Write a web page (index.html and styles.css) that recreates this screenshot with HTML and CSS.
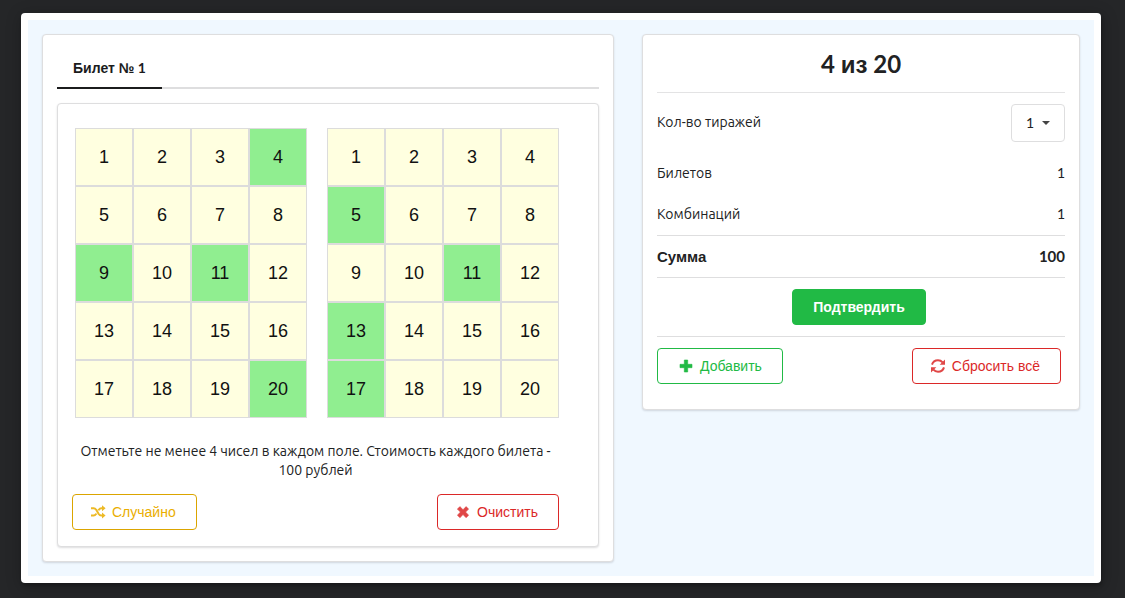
FILE: index.html
```html
<!DOCTYPE html>
<html lang="ru">
<head>
<meta charset="utf-8">
<meta name="viewport" content="width=device-width, initial-scale=1">
<title>4 из 20</title>
<link rel="stylesheet" href="styles.css">
</head>
<body>
<main class="modal">
  <div class="content">
    <section class="segment ticket">
      <nav class="tabs" role="tablist">
        <button class="tab active" type="button" role="tab" aria-selected="true"><span class="word">Билет №</span> 1</button>
      </nav>
      <div class="segment panel">
        <div class="fields">
          <div class="field" id="field-1"></div>
          <div class="field" id="field-2"></div>
        </div>
        <p class="hint">Отметьте не менее 4 чисел в каждом поле. Стоимость каждого билета - 100 рублей</p>
        <div class="actions">
          <button class="btn yellow" type="button">
            <svg class="icon" viewBox="0 0 16 14" aria-hidden="true"><path d="M1 3.2h2.6c1.2 0 1.900.600 2.600 1.600l2.500 4.200c.7 1 1.400 1.500 2.500 1.500h1.500M1 10.500h2.600c1.100 0 1.800-.5 2.500-1.500l.3-.5M8.400 5.400l.4-.6c.7-1 1.400-1.600 2.500-1.600h1.500" fill="none" stroke="currentColor" stroke-width="2"/><path d="M12 .2 15.600 3.200 12 6.300zM12 7.400l3.600 3.100L12 13.600z"/></svg>
            <span>Случайно</span>
          </button>
          <button class="btn red" type="button">
            <svg class="icon" viewBox="0 0 16 14" aria-hidden="true"><path d="M4.900 1.600 8 4.700l3.100-3.100 2.500 2.500L10.600 7.100l3 3.100-2.500 2.500L8 9.600l-3.100 3.100-2.500-2.500 3-3.100-3-3z" stroke="currentColor" stroke-width=".6" stroke-linejoin="round"/></svg>
            <span>Очистить</span>
          </button>
        </div>
      </div>
    </section>
    <aside class="segment summary">
      <h1 class="title">4 <span class="word">из</span> 20</h1>
      <div class="row draws">
        <label for="draws">Кол-во тиражей</label>
        <span class="dropdown">
          <select id="draws"><option>1</option><option>2</option><option>3</option></select>
          <svg class="caret" viewBox="0 0 8 4" aria-hidden="true"><path d="M0 0h8L4 4z"/></svg>
        </span>
      </div>
      <div class="row"><span>Билетов</span><span class="num">1</span></div>
      <div class="row"><span>Комбинаций</span><span class="num">1</span></div>
      <div class="row total"><span>Сумма</span><span class="num">100</span></div>
      <div class="confirm"><button class="btn primary" type="button">Подтвердить</button></div>
      <div class="actions bottom">
        <button class="btn green" type="button">
          <svg class="icon" viewBox="0 0 16 14" aria-hidden="true"><path d="M6.300 1h3.400v4.300H14v3.400H9.700V13H6.300V8.700H2V5.300h4.300z" stroke="currentColor" stroke-width=".6" stroke-linejoin="round"/></svg>
          <span>Добавить</span>
        </button>
        <button class="btn red" type="button">
          <svg class="icon" viewBox="0 0 16 14" aria-hidden="true"><path d="M2 5.600C2.800 2.900 5.200 1.200 8 1.200c1.900 0 3.500.8 4.600 2.100M14 8.400c-.8 2.700-3.200 4.400-6 4.400-1.900 0-3.500-.8-4.600-2.100" fill="none" stroke="currentColor" stroke-width="2"/><path d="M15 .5v5.300H9.700zM1 13.500V8.200h5.300z"/></svg>
          <span>Сбросить всё</span>
        </button>
      </div>
    </aside>
  </div>
</main>
<script src="script.js"></script>
</body>
</html>
```
FILE: styles.css
```css
*, *::before, *::after { box-sizing: border-box; }
body {
  margin: 0;
  background: #252628;
  color: #212223;
  font: 14px/19px "Ubuntu", "Noto Sans", sans-serif;
}
button, select { font: inherit; color: inherit; cursor: pointer; }
.modal {
  width: 96%;
  margin: 13px auto 15px 21px;
  padding: 7px;
  background: #fff;
  border-radius: 4px;
  box-shadow: 1px 3px 3px rgba(0, 0, 0, .2), 1px 3px 15px 2px rgba(0, 0, 0, .2);
}
.content {
  display: grid;
  grid-template-columns: 9fr 7fr;
  align-items: start;
  background: #f0f8ff;
}
.segment {
  background: #fff;
  border: 1px solid #dededf;
  border-radius: 4px;
  box-shadow: 0 1px 2px rgba(34, 36, 38, .15);
  padding: 14px;
}
.content > .segment { margin: 14px; }
.tabs { display: flex; border-bottom: 2px solid #dededf; }
.tab {
  height: 40px;
  margin-bottom: -2px;
  padding: 0 16px;
  border: 0;
  border-bottom: 2px solid #1b1c1d;
  background: none;
  color: #1b1c1d;
  font: bold 14px/38px Lato, "Liberation Sans", sans-serif;
}
.word { font-family: "Liberation Sans", Arial, sans-serif; line-height: 1; }
.panel { margin-top: 14px; padding: 24px 39px 16px 14px; }
.fields { display: flex; gap: 20px; padding-left: 3px; }
.field { display: grid; grid-template-columns: repeat(4, 58px); }
.cell {
  height: 58px;
  padding: 0;
  border: 1px solid #dcdcdc;
  background: #ffffe0;
  color: #111;
  font: 18px/56px "Liberation Sans", Arial, sans-serif;
}
.cell.selected { background: #90ee90; }
.hint { margin: 24px 0 14px; text-align: center; }
.actions { display: flex; justify-content: space-between; }
.btn {
  display: flex;
  align-items: center;
  height: 36px;
  padding: 0 20px;
  border: 1px solid currentColor;
  border-radius: 4px;
  background: #fff;
  font: 14px/16px "Liberation Sans", Arial, sans-serif;
}
.icon { width: 16px; height: 14px; margin-right: 6px; margin-left: -3px; fill: currentColor; opacity: .85; }
.yellow { color: #eaae00; border-color: #dba500; }
.red { color: #db2828; }
.green { padding-left: 23px; color: #21ba45; }
.green .icon { opacity: 1; }
.primary { background: #21ba45; border-color: #21ba45; color: #fff; font-weight: bold; }
.title {
  margin: 0;
  padding-bottom: 14px;
  border-bottom: 1px solid #e3e3e4;
  text-align: center;
  font: bold 24px/29px Lato, "Liberation Sans", sans-serif;
}
.row { display: flex; align-items: center; justify-content: space-between; height: 41px; }
.draws { height: 60px; }
.draws label { padding-bottom: 2px; }
.num { padding-bottom: 2px; font-family: Lato, sans-serif; }
.dropdown { position: relative; display: flex; }
.dropdown select {
  width: 54px;
  height: 38px;
  padding: 0 14px 2px;
  appearance: none;
  border: 1px solid #dededf;
  border-radius: 4px;
  background: #fff;
  font-family: Lato, sans-serif;
}
.caret { position: absolute; right: 15px; top: 17px; width: 8px; height: 4px; fill: #444; pointer-events: none; }
.total {
  height: 43px;
  border-top: 1px solid #dededf;
  border-bottom: 1px solid #dededf;
  font: bold 15px/19px "Liberation Sans", Arial, sans-serif;
}
.total .num { padding-bottom: 0; }
.confirm { display: flex; justify-content: center; padding: 11px 0; border-bottom: 1px solid #dededf; }
.confirm .btn { margin-right: 4px; }
.bottom { padding: 11px 4px 11px 0; }
```
FILE: script.js
```js
const picks = { "field-1": [4, 9, 11, 20], "field-2": [5, 11, 13, 17] };
for (const [id, selected] of Object.entries(picks)) {
  const field = document.getElementById(id);
  for (let n = 1; n <= 20; n++) {
    const cell = document.createElement("button");
    cell.type = "button";
    cell.className = selected.includes(n) ? "cell selected" : "cell";
    cell.textContent = n;
    cell.addEventListener("click", () => cell.classList.toggle("selected"));
    field.append(cell);
  }
}
```
